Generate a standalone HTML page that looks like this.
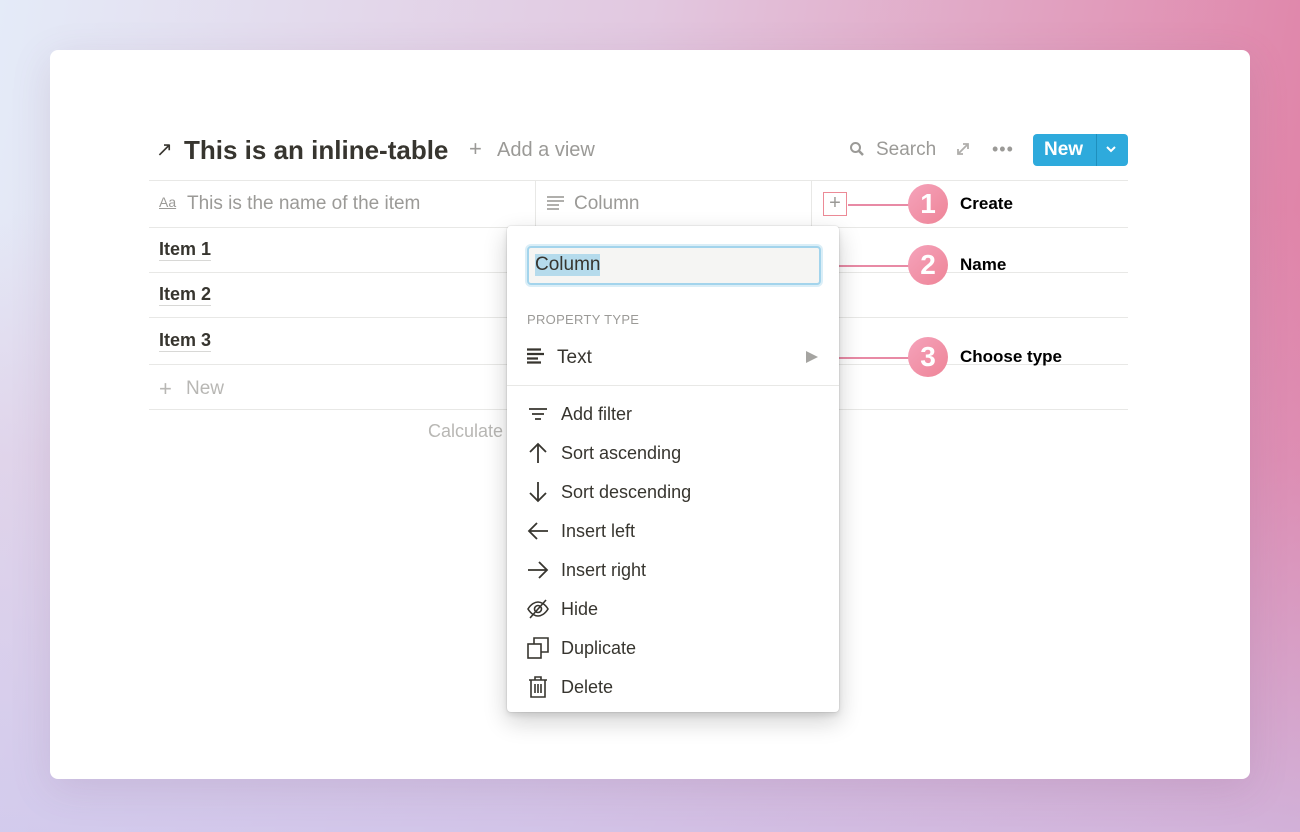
<!DOCTYPE html>
<html><head><meta charset="utf-8"><style>
*{margin:0;padding:0;box-sizing:border-box}
body{width:1300px;height:832px;overflow:hidden;position:relative;font-family:"Liberation Sans",sans-serif;
background:linear-gradient(100deg,#e4ebf8 0%,#e2c8e0 45%,#e07aa0 100%);}
.ov{position:absolute;inset:0;background:linear-gradient(0deg,rgba(205,195,235,.75) 0%,rgba(215,170,210,.3) 45%,rgba(0,0,0,0) 75%);}
.card{position:absolute;left:50px;top:50px;width:1200px;height:729px;background:#fff;border-radius:8px;box-shadow:0 10px 40px rgba(120,80,120,.15)}
.a{position:absolute;white-space:nowrap}
.hl{position:absolute;height:1px;background:#e8e8e6}
.vl{position:absolute;width:1px;background:#e8e8e6}
.g{color:#9b9a97}
.it{font-size:18px;font-weight:bold;color:#37352f;border-bottom:1px solid #d8d8d6;line-height:22px}
.menu{position:absolute;left:507px;top:226px;width:332px;height:486px;background:#fff;border-radius:4px;box-shadow:0 0 0 1px rgba(15,15,15,.05),0 3px 6px rgba(15,15,15,.1),0 9px 24px rgba(15,15,15,.2)}
.mi{position:absolute;left:20px;font-size:18px;color:#37352f;display:flex;align-items:center}
.mi svg{width:22px;height:22px;margin-right:12px}
.circ{position:absolute;width:40px;height:40px;border-radius:50%;background:linear-gradient(135deg,#f5a3bb,#ee8497);color:#fff;font-weight:bold;font-size:28px;text-align:center;line-height:40px}
.lab{position:absolute;font-size:17px;font-weight:bold;color:#000}
.pl{position:absolute;height:1.5px;background:#e88aa5}
</style></head><body>
<div class="ov"></div>
<div class="card"></div>

<div class="a" style="left:156px;top:137px;font-size:20px;color:#37352f">↗</div>
<div class="a" style="left:184px;top:135px;font-size:26px;font-weight:bold;color:#37352f">This is an inline-table</div>
<div class="a g" style="left:469px;top:136px;font-size:22px">+</div>
<div class="a g" style="left:497px;top:139px;font-size:20px">Add a view</div>

<svg class="a" style="left:849px;top:141px" width="16" height="16" viewBox="0 0 16 16"><circle cx="6.5" cy="6.5" r="4.5" fill="none" stroke="#9b9a97" stroke-width="2"/><path d="M10 10l4 4" stroke="#9b9a97" stroke-width="2.5"/></svg>
<div class="a g" style="left:876px;top:139px;font-size:19px">Search</div>
<svg class="a" style="left:956px;top:142px" width="14" height="14" viewBox="0 0 14 14"><path d="M2 12L12 2M7 2h5v5M2 7v5h5" stroke="#b0afac" stroke-width="1.8" fill="none"/></svg>
<div class="a" style="left:992px;top:139px;font-size:18px;color:#9b9a97;letter-spacing:1px">•••</div>
<div class="a" style="left:1033px;top:134px;width:95px;height:32px;background:#2eaadc;border-radius:4px;color:#fff;font-weight:bold;font-size:19px;line-height:32px;padding-left:11px">New</div>
<div class="vl" style="left:1096px;top:134px;height:32px;background:#1f8fbd"></div>
<svg class="a" style="left:1105px;top:145px" width="12" height="10" viewBox="0 0 12 10"><path d="M2 2l4 4 4-4" stroke="#fff" stroke-width="2" fill="none"/></svg>

<div class="hl" style="left:149px;top:180px;width:979px"></div>
<div class="hl" style="left:149px;top:227px;width:979px"></div>
<div class="hl" style="left:149px;top:272px;width:979px"></div>
<div class="hl" style="left:149px;top:317px;width:979px"></div>
<div class="hl" style="left:149px;top:364px;width:979px"></div>
<div class="hl" style="left:149px;top:409px;width:979px"></div>
<div class="vl" style="left:535px;top:180px;height:47px"></div>
<div class="vl" style="left:811px;top:180px;height:47px"></div>

<div class="a g" style="left:159px;top:194px;font-size:14px;text-decoration:underline">Aa</div>
<div class="a g" style="left:187px;top:193px;font-size:19px">This is the name of the item</div>
<svg class="a" style="left:547px;top:196px" width="18" height="14" viewBox="0 0 18 14"><path d="M0 1h17M0 5h17M0 9h12M0 13h12" stroke="#b0afac" stroke-width="2"/></svg>
<div class="a g" style="left:574px;top:193px;font-size:19px">Column</div>

<div class="a it" style="left:159px;top:238px">Item 1</div>
<div class="a it" style="left:159px;top:283px">Item 2</div>
<div class="a it" style="left:159px;top:329px">Item 3</div>
<div class="a" style="left:159px;top:376px;font-size:22px;color:#b8b7b4">+</div>
<div class="a" style="left:186px;top:378px;font-size:19px;color:#b8b7b4">New</div>
<div class="a" style="left:428px;top:421px;font-size:18px;color:#b8b7b4">Calculate</div>

<div class="a" style="left:823px;top:192px;width:24px;height:24px;border:1.5px solid #ec8a96;color:#9b9a97;font-size:20px;line-height:20px;text-align:center">+</div>
<div class="pl" style="left:848px;top:204px;width:62px"></div>
<div class="circ" style="left:908px;top:184px">1</div>
<div class="lab" style="left:960px;top:194px">Create</div>
<div class="pl" style="left:828px;top:265px;width:82px"></div>
<div class="circ" style="left:908px;top:245px">2</div>
<div class="lab" style="left:960px;top:255px">Name</div>
<div class="pl" style="left:828px;top:357px;width:82px"></div>
<div class="circ" style="left:908px;top:337px">3</div>
<div class="lab" style="left:960px;top:347px">Choose type</div>

<div class="menu">
 <div class="a" style="left:20px;top:20px;width:294px;height:39px;background:#f5f5f3;border:2px solid #a3d4ec;border-radius:4px;box-shadow:0 0 0 2px rgba(163,212,236,.4)"></div>
 <div class="a" style="left:28px;top:28px;font-size:19px;color:#37352f;background:#b5dbec;line-height:22px">Column</div>
 <div class="a g" style="left:20px;top:86px;font-size:13px;letter-spacing:.3px">PROPERTY TYPE</div>
 <svg class="a" style="left:20px;top:122px" width="18" height="16" viewBox="0 0 18 16"><path d="M0 1.5h14M0 6h17M0 10.5h11M0 14.5h14" stroke="#37352f" stroke-width="2.2"/></svg>
 <div class="a" style="left:50px;top:121px;font-size:19px;color:#37352f">Text</div>
 <svg class="a" style="left:298px;top:124px" width="14" height="14" viewBox="0 0 14 14"><path d="M1 1l12 6-12 6z" fill="#a5a4a1"/></svg>
 <div class="hl" style="left:0;top:159px;width:332px"></div>
 <div class="mi" style="top:177px"><svg viewBox="0 0 22 22"><path d="M2 6h18M5 11h12M8 16h6" stroke="#37352f" stroke-width="1.8"/></svg>Add filter</div>
 <div class="mi" style="top:216px"><svg viewBox="0 0 22 22"><path d="M11 21V2M3 10l8-8 8 8" stroke="#37352f" stroke-width="1.8" fill="none"/></svg>Sort ascending</div>
 <div class="mi" style="top:255px"><svg viewBox="0 0 22 22"><path d="M11 1v19M3 12l8 8 8-8" stroke="#37352f" stroke-width="1.8" fill="none"/></svg>Sort descending</div>
 <div class="mi" style="top:294px"><svg viewBox="0 0 22 22"><path d="M21 11H2M10 3l-8 8 8 8" stroke="#37352f" stroke-width="1.8" fill="none"/></svg>Insert left</div>
 <div class="mi" style="top:333px"><svg viewBox="0 0 22 22"><path d="M1 11h19M12 3l8 8-8 8" stroke="#37352f" stroke-width="1.8" fill="none"/></svg>Insert right</div>
 <div class="mi" style="top:372px"><svg viewBox="0 0 22 22"><path d="M1 11c3-5 7-7 10-7s7 2 10 7c-3 5-7 7-10 7s-7-2-10-7z" stroke="#37352f" stroke-width="1.6" fill="none"/><circle cx="11" cy="11" r="3.5" stroke="#37352f" stroke-width="1.6" fill="none"/><path d="M3 20L19 2" stroke="#37352f" stroke-width="1.6"/></svg>Hide</div>
 <div class="mi" style="top:411px"><svg viewBox="0 0 22 22"><rect x="1" y="7" width="13" height="14" stroke="#37352f" stroke-width="1.6" fill="none"/><path d="M7 7V1h14v14h-7" stroke="#37352f" stroke-width="1.6" fill="none"/></svg>Duplicate</div>
 <div class="mi" style="top:450px"><svg viewBox="0 0 22 22"><path d="M2 4h18M8 4V1h6v3M4 4v17h14V4M8 8v9M11 8v9M14 8v9" stroke="#37352f" stroke-width="1.6" fill="none"/></svg>Delete</div>
</div>
</body></html>
